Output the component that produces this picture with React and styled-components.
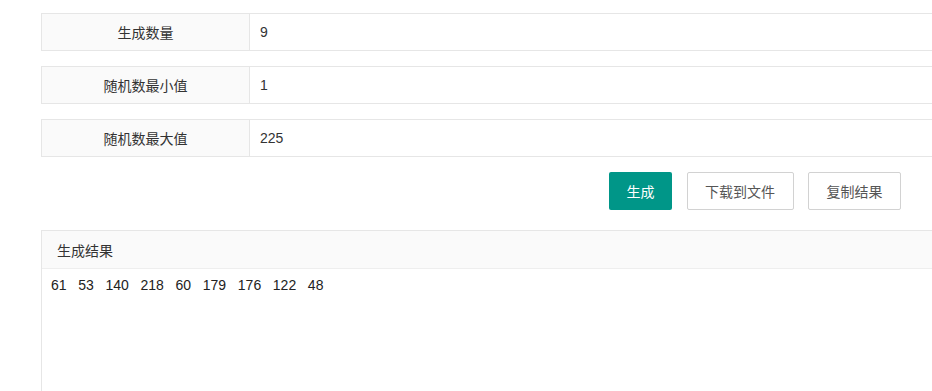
import React from "react";
import styled, { createGlobalStyle } from "styled-components";

const Global = createGlobalStyle`
  html, body { margin: 0; padding: 0; background: #fff; overflow: hidden; }
  body {
    font-family: "Liberation Sans", Arial, "Noto Sans CJK SC", sans-serif;
    font-size: 14px;
    color: #333;
  }
`;

const Page = styled.div`
  width: 1100px;
  padding: 13px 0 0 41px;
`;

const FieldRow = styled.div`
  display: flex;
  height: 38px;
  box-sizing: border-box;
  border: 1px solid #e6e6e6;
  margin-bottom: 15px;
`;

const Label = styled.div`
  width: 208px;
  flex: none;
  box-sizing: border-box;
  background: #fafafa;
  border-right: 1px solid #e6e6e6;
  display: flex;
  align-items: center;
  justify-content: center;
  color: #333;
`;

const Value = styled.div`
  flex: 1;
  display: flex;
  align-items: center;
  padding-left: 10px;
  color: #333;
`;

const Actions = styled.div`
  display: flex;
  gap: 14.5px;
  padding-left: 568px;
  margin-bottom: 20px;
`;

const Button = styled.button`
  height: 38px;
  box-sizing: border-box;
  padding: 0 17.5px;
  font: inherit;
  font-size: 14px;
  border-radius: 2px;
  cursor: pointer;
  border: ${(p) => (p.$primary ? "0" : "1px solid #d2d2d2")};
  background: ${(p) => (p.$primary ? "#009688" : "#fff")};
  color: ${(p) => (p.$primary ? "#fff" : "#555")};
`;

const Panel = styled.div`
  border: 1px solid #e6e6e6;
  height: 200px;
`;

const PanelHeader = styled.div`
  height: 37px;
  background: #fafafa;
  border-bottom: 1px solid #eee;
  display: flex;
  align-items: center;
  padding-left: 15px;
  color: #333;
`;

const PanelBody = styled.div`
  padding: 6px 9px;
  white-space: pre;
  color: #222;
  line-height: 20px;
`;

const fields = [
  ["生成数量", "9"],
  ["随机数最小值", "1"],
  ["随机数最大值", "225"],
];

const results = [61, 53, 140, 218, 60, 179, 176, 122, 48];

export default function App() {
  return (
    <>
      <Global />
      <Page>
        {fields.map(([l, v]) => (
          <FieldRow key={l}>
            <Label>{l}</Label>
            <Value>{v}</Value>
          </FieldRow>
        ))}
        <Actions>
          <Button $primary>生成</Button>
          <Button>下载到文件</Button>
          <Button>复制结果</Button>
        </Actions>
        <Panel>
          <PanelHeader>生成结果</PanelHeader>
          <PanelBody>{results.join("   ")}</PanelBody>
        </Panel>
      </Page>
    </>
  );
}
